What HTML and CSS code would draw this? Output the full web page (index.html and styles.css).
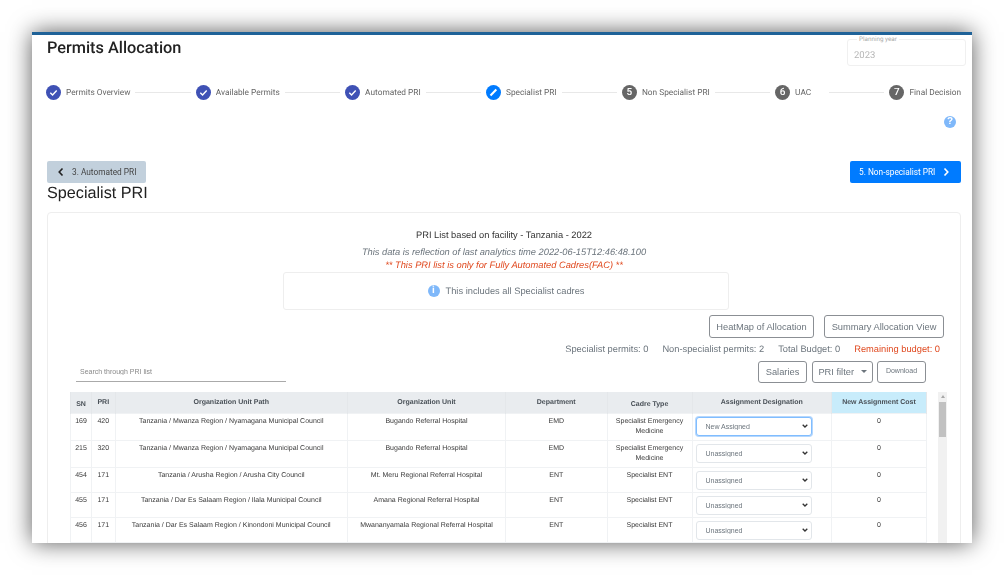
FILE: index.html
```html
<!DOCTYPE html>
<html lang="en">
<head>
    <meta charset="UTF-8">
    <title>Permits Allocation</title>
    <link rel="stylesheet" href="styles.css">
</head>
<body>

<div class="frame">

    <!-- page title and year field -->
    <div class="pageHeader">
        <h1 class="pageTitle">Permits Allocation</h1>
        <div class="yearField">
            <span class="yearLabel">Planning year</span>
            <span class="yearValue">2023</span>
        </div>
    </div>

    <!-- steps -->
    <div class="stepper">
        <span class="stepIcon done"><svg viewBox="0 0 16 16"><path d="M4.6 8.2l2.4 2.4 4.4-4.8"/></svg></span>
        <span class="stepLabel">Permits Overview</span>
        <span class="stepLine"></span>
        <span class="stepIcon done"><svg viewBox="0 0 16 16"><path d="M4.6 8.2l2.4 2.4 4.4-4.8"/></svg></span>
        <span class="stepLabel">Available Permits</span>
        <span class="stepLine"></span>
        <span class="stepIcon done"><svg viewBox="0 0 16 16"><path d="M4.6 8.2l2.4 2.4 4.4-4.8"/></svg></span>
        <span class="stepLabel">Automated PRI</span>
        <span class="stepLine"></span>
        <span class="stepIcon active"><svg viewBox="0 0 16 16"><path d="M4.8 11.2l6.2-6.4" stroke-width="2.2"/></svg></span>
        <span class="stepLabel">Specialist PRI</span>
        <span class="stepLine"></span>
        <span class="stepIcon todo">5</span>
        <span class="stepLabel">Non Specialist PRI</span>
        <span class="stepLine"></span>
        <span class="stepIcon todo">6</span>
        <span class="stepLabel uac">UAC</span>
        <span class="stepLine"></span>
        <span class="stepIcon todo">7</span>
        <span class="stepLabel">Final Decision</span>
    </div>

    <div class="helpRow">
        <span class="roundHint">?</span>
    </div>

    <!-- previous / next -->
    <div class="navRow">
        <button class="navBtn prev">
            <svg class="chev" viewBox="0 0 8 10"><path d="M5.5 1.5L2.2 5l3.3 3.5"/></svg>
            3. Automated PRI
        </button>
        <button class="navBtn next">
            5. Non-specialist PRI
            <svg class="chev" viewBox="0 0 8 10"><path d="M2.5 1.5L5.8 5 2.5 8.5"/></svg>
        </button>
    </div>

    <h2 class="sectionTitle">Specialist PRI</h2>

    <div class="card">
        <p class="cardTitle">PRI List based on facility - Tanzania - 2022</p>
        <p class="cardNote">This data is reflection of last analytics time 2022-06-15T12:46:48.100</p>
        <p class="cardNote red">** This PRI list is only for Fully Automated Cadres(FAC) **</p>

        <div class="infoBox">
            <span class="roundHint">i</span>
            This includes all Specialist cadres
        </div>

        <div class="actionRow">
            <button class="outlineBtn heatBtn">HeatMap of Allocation</button>
            <button class="outlineBtn summaryBtn">Summary Allocation View</button>
        </div>

        <div class="statsRow">
            <span>Specialist permits: 0</span>
            <span>Non-specialist permits: 2</span>
            <span>Total Budget: 0</span>
            <span class="red">Remaining budget: 0</span>
        </div>

        <div class="toolRow">
            <input class="searchBox" type="text" placeholder="Search through PRI list">
            <div class="toolBtns">
                <button class="outlineBtn salaryBtn">Salaries</button>
                <button class="outlineBtn filterBtn">PRI filter <span class="caret"></span></button>
                <button class="outlineBtn small">Download</button>
            </div>
        </div>

        <div class="tableWrap">
            <table class="priTable">
                <colgroup>
                    <col class="cSn"><col class="cPri"><col class="cPath"><col class="cUnit">
                    <col class="cDept"><col class="cCadre"><col class="cAssign"><col class="cCost">
                </colgroup>
                <thead>
                    <tr>
                        <th class="low">SN</th>
                        <th>PRI</th>
                        <th>Organization Unit Path</th>
                        <th>Organization Unit</th>
                        <th>Department</th>
                        <th class="low">Cadre Type</th>
                        <th>Assignment Designation</th>
                        <th class="costHead">New Assignment Cost</th>
                    </tr>
                </thead>
                <tbody>
                    <tr>
                        <td>169</td><td>420</td>
                        <td>Tanzania / Mwanza Region / Nyamagana Municipal Council</td>
                        <td>Bugando Referral Hospital</td>
                        <td>EMD</td><td>Specialist Emergency Medicine</td>
                        <td class="pick"><select class="assign focused"><option>New Assigned</option><option>Unassigned</option></select></td>
                        <td>0</td>
                    </tr>
                    <tr>
                        <td>215</td><td>320</td>
                        <td>Tanzania / Mwanza Region / Nyamagana Municipal Council</td>
                        <td>Bugando Referral Hospital</td>
                        <td>EMD</td><td>Specialist Emergency Medicine</td>
                        <td class="pick"><select class="assign"><option>Unassigned</option><option>New Assigned</option></select></td>
                        <td>0</td>
                    </tr>
                    <tr>
                        <td>454</td><td>171</td>
                        <td>Tanzania / Arusha Region / Arusha City Council</td>
                        <td>Mt. Meru Regional Referral Hospital</td>
                        <td>ENT</td><td>Specialist ENT</td>
                        <td class="pick"><select class="assign"><option>Unassigned</option><option>New Assigned</option></select></td>
                        <td>0</td>
                    </tr>
                    <tr>
                        <td>455</td><td>171</td>
                        <td>Tanzania / Dar Es Salaam Region / Ilala Municipal Council</td>
                        <td>Amana Regional Referral Hospital</td>
                        <td>ENT</td><td>Specialist ENT</td>
                        <td class="pick"><select class="assign"><option>Unassigned</option><option>New Assigned</option></select></td>
                        <td>0</td>
                    </tr>
                    <tr>
                        <td>456</td><td>171</td>
                        <td>Tanzania / Dar Es Salaam Region / Kinondoni Municipal Council</td>
                        <td>Mwananyamala Regional Referral Hospital</td>
                        <td>ENT</td><td>Specialist ENT</td>
                        <td class="pick"><select class="assign"><option>Unassigned</option><option>New Assigned</option></select></td>
                        <td>0</td>
                    </tr>
                </tbody>
            </table>
            <div class="scrollTrack">
                <span class="scrollUp"></span>
                <span class="scrollThumb"></span>
            </div>
        </div>
    </div>
</div>

</body>
</html>
```

FILE: styles.css
```css
* {
    box-sizing: border-box;
}

body {
    margin: 0;
    padding: 32px;
    background: #fff;
    font-family: "Liberation Sans", Arial, sans-serif;
    text-rendering: geometricPrecision;
}

.frame {
    width: 940px;
    height: 511px;
    overflow: hidden;
    background: #fff;
    border-top: 3px solid #1f6298;
    padding: 0 6px 0 14px;
    box-shadow: 0 0 22px rgba(0, 0, 0, 0.65);
    filter: blur(0.35px);
}

.pageHeader {
    display: flex;
    justify-content: space-between;
    align-items: flex-start;
    padding-top: 4px;
}

.pageTitle {
    margin: 0 0 0 1px;
    font-family: Roboto, sans-serif;
    font-size: 16.3px;
    font-weight: 500;
    line-height: 17px;
    color: #222;
}

.yearField {
    position: relative;
    width: 119px;
    height: 27px;
    border: 1px solid #f0f0f0;
    border-radius: 3px;
    padding: 10px 6px 0;
}

.yearLabel {
    position: absolute;
    top: -5px;
    left: 9px;
    padding: 0 2px;
    background: #fff;
    font-family: Roboto, sans-serif;
    font-size: 6.3px;
    line-height: 9px;
    color: #aaa;
}

.yearValue {
    display: block;
    font-family: Roboto, sans-serif;
    font-size: 9.5px;
    line-height: 12px;
    color: #b5b5b5;
}

.stepper {
    display: flex;
    align-items: center;
    gap: 5px;
    height: 15px;
    margin-top: 19px;
    margin-right: 5px;
    font-family: Roboto, sans-serif;
    font-size: 8.3px;
    color: #666;
}

.stepIcon {
    flex: none;
    display: flex;
    align-items: center;
    justify-content: center;
    width: 15px;
    height: 15px;
    border-radius: 50%;
    color: #fff;
    font-size: 10px;
    font-weight: 500;
}

.stepIcon svg {
    width: 15px;
    height: 15px;
    fill: none;
    stroke: #fff;
    stroke-width: 1.5;
}

.done {
    background: #3f51b5;
}

.active {
    background: #007bff;
}

.todo {
    background: #666;
}

.stepLabel {
    flex: none;
    white-space: nowrap;
}

.uac {
    width: 29px;
}

.stepLine {
    flex: 1;
    height: 1px;
    background: #e8e8e8;
}

.helpRow {
    display: flex;
    justify-content: flex-end;
    margin-top: 16px;
    margin-right: 10px;
}

.roundHint {
    flex: none;
    display: inline-flex;
    align-items: center;
    justify-content: center;
    width: 12px;
    height: 12px;
    border-radius: 50%;
    background: #7fb8fa;
    color: #fff;
    font-size: 10px;
    font-weight: bold;
    line-height: 12px;
}

.navRow {
    display: flex;
    justify-content: space-between;
    margin: 33px 5px 0 1px;
}

.navBtn {
    display: flex;
    align-items: center;
    height: 22px;
    border: 0;
    border-radius: 2px;
    font-family: Roboto, sans-serif;
    font-size: 8.3px;
}

.prev {
    width: 99px;
    padding: 0 0 0 10px;
    gap: 7px;
    background: #c2d0dc;
    color: #444;
}

.next {
    width: 111px;
    padding: 0 0 0 9px;
    gap: 7px;
    background: #007bff;
    color: #fff;
}

.chev {
    width: 8px;
    height: 10px;
    fill: none;
    stroke: currentColor;
    stroke-width: 1.6;
}

.prev .chev {
    color: #222;
}

.sectionTitle {
    margin: 0 0 0 1px;
    font-size: 16.2px;
    font-weight: normal;
    line-height: 20px;
    color: #222;
}

.card {
    width: 914px;
    height: 340px;
    margin: 9px 0 0 1px;
    border: 1px solid #eee;
    border-radius: 4px;
    padding: 16px 16px 0 22px;
    font-size: 9.3px;
    color: #6c757d;
}

.cardTitle {
    margin: 0 0 5px;
    padding-right: 6px;
    line-height: 12px;
    text-align: center;
    color: #333;
}

.cardNote {
    margin: 0 0 1px;
    padding-right: 6px;
    line-height: 12px;
    text-align: center;
    font-style: italic;
}

.red {
    color: #e0491f;
}

.infoBox {
    display: flex;
    align-items: center;
    justify-content: center;
    gap: 6px;
    width: 446px;
    height: 38px;
    margin-left: 213px;
    border: 1px solid #eee;
    border-radius: 3px;
}

.actionRow {
    display: flex;
    justify-content: flex-end;
    gap: 10px;
    margin-top: 5px;
}

.outlineBtn {
    height: 23px;
    padding: 0;
    border: 1px solid #8b8f94;
    border-radius: 3px;
    background: #fff;
    font-family: "Liberation Sans", Arial, sans-serif;
    font-size: 9.3px;
    color: #6c757d;
}

.heatBtn { width: 105px; }
.summaryBtn { width: 120px; }
.salaryBtn { width: 49px; margin-right: 1px; }
.filterBtn { width: 61px; }

.statsRow {
    display: flex;
    justify-content: flex-end;
    gap: 14px;
    margin: 5px 4px 0 0;
    line-height: 12px;
}

.toolRow {
    display: flex;
    justify-content: space-between;
    margin: 6px 18px 0 0;
}

.searchBox {
    width: 210px;
    height: 21px;
    margin-left: 6px;
    padding: 0 4px;
    border: 0;
    border-bottom: 1px solid #aaa;
    font-family: "Liberation Sans", Arial, sans-serif;
    font-size: 7px;
}

.searchBox::placeholder {
    color: #888;
}

.toolBtns {
    display: flex;
    gap: 4px;
}

.toolBtns .outlineBtn {
    height: 22px;
}

.caret {
    display: inline-block;
    margin-left: 4px;
    vertical-align: 2px;
    border-top: 3px solid #6c757d;
    border-left: 3px solid transparent;
    border-right: 3px solid transparent;
}

.toolBtns .small {
    width: 49px;
    padding: 0 0 3px;
    font-size: 7px;
}

.tableWrap {
    display: flex;
    align-items: flex-start;
    gap: 11px;
    margin-top: 9px;
}

.priTable {
    flex: none;
    width: 856px;
    table-layout: fixed;
    border-collapse: collapse;
    font-size: 7px;
    color: #3a3a3a;
    text-align: center;
}

.cSn { width: 21px; }
.cPri { width: 23.5px; }
.cPath { width: 232.5px; }
.cUnit { width: 158px; }
.cDept { width: 101.5px; }
.cCadre { width: 85px; }
.cAssign { width: 139.5px; }
.cCost { width: 95px; }

.priTable th {
    height: 21px;
    padding: 6px 2px 0;
    vertical-align: top;
    background: #e9ecef;
    border: 1px solid #e4e7ea;
    border-width: 0 1px;
    line-height: 9px;
    color: #495057;
}

.priTable th.low {
    padding-top: 8px;
}

.priTable th.costHead {
    background: #c8ecfb;
}

.priTable td {
    padding: 3px 3px 2px;
    vertical-align: top;
    border: 1px solid #f0f2f4;
    line-height: 10.5px;
}

.priTable td.pick {
    padding: 3px 19px 2px 3px;
}

.assign {
    display: block;
    width: 116px;
    height: 19px;
    padding: 0 0 0 9px;
    border: 1px solid #e2e6ea;
    border-radius: 3px;
    appearance: none;
    background: #fff url("data:image/svg+xml,%3Csvg xmlns='http://www.w3.org/2000/svg' viewBox='0 0 6 4'%3E%3Cpath d='M.7.7L3 3l2.3-2.3' fill='none' stroke='%23333' stroke-width='1.3'/%3E%3C/svg%3E") no-repeat right 3px center / 6px 4px;
    font-family: "Liberation Sans", Arial, sans-serif;
    font-size: 7px;
    color: #6c757d;
}

.focused {
    border-color: #80bdff;
    box-shadow: 0 0 0 1px #b5d7fd;
}

.scrollTrack {
    flex: none;
    display: flex;
    flex-direction: column;
    align-items: center;
    width: 9px;
    height: 160px;
    background: #f1f1f1;
}

.scrollUp {
    margin-top: 3px;
    border-bottom: 3px solid #a8a8a8;
    border-left: 2px solid transparent;
    border-right: 2px solid transparent;
}

.scrollThumb {
    width: 7px;
    height: 35px;
    margin-top: 4px;
    background: #c1c1c1;
}
```
